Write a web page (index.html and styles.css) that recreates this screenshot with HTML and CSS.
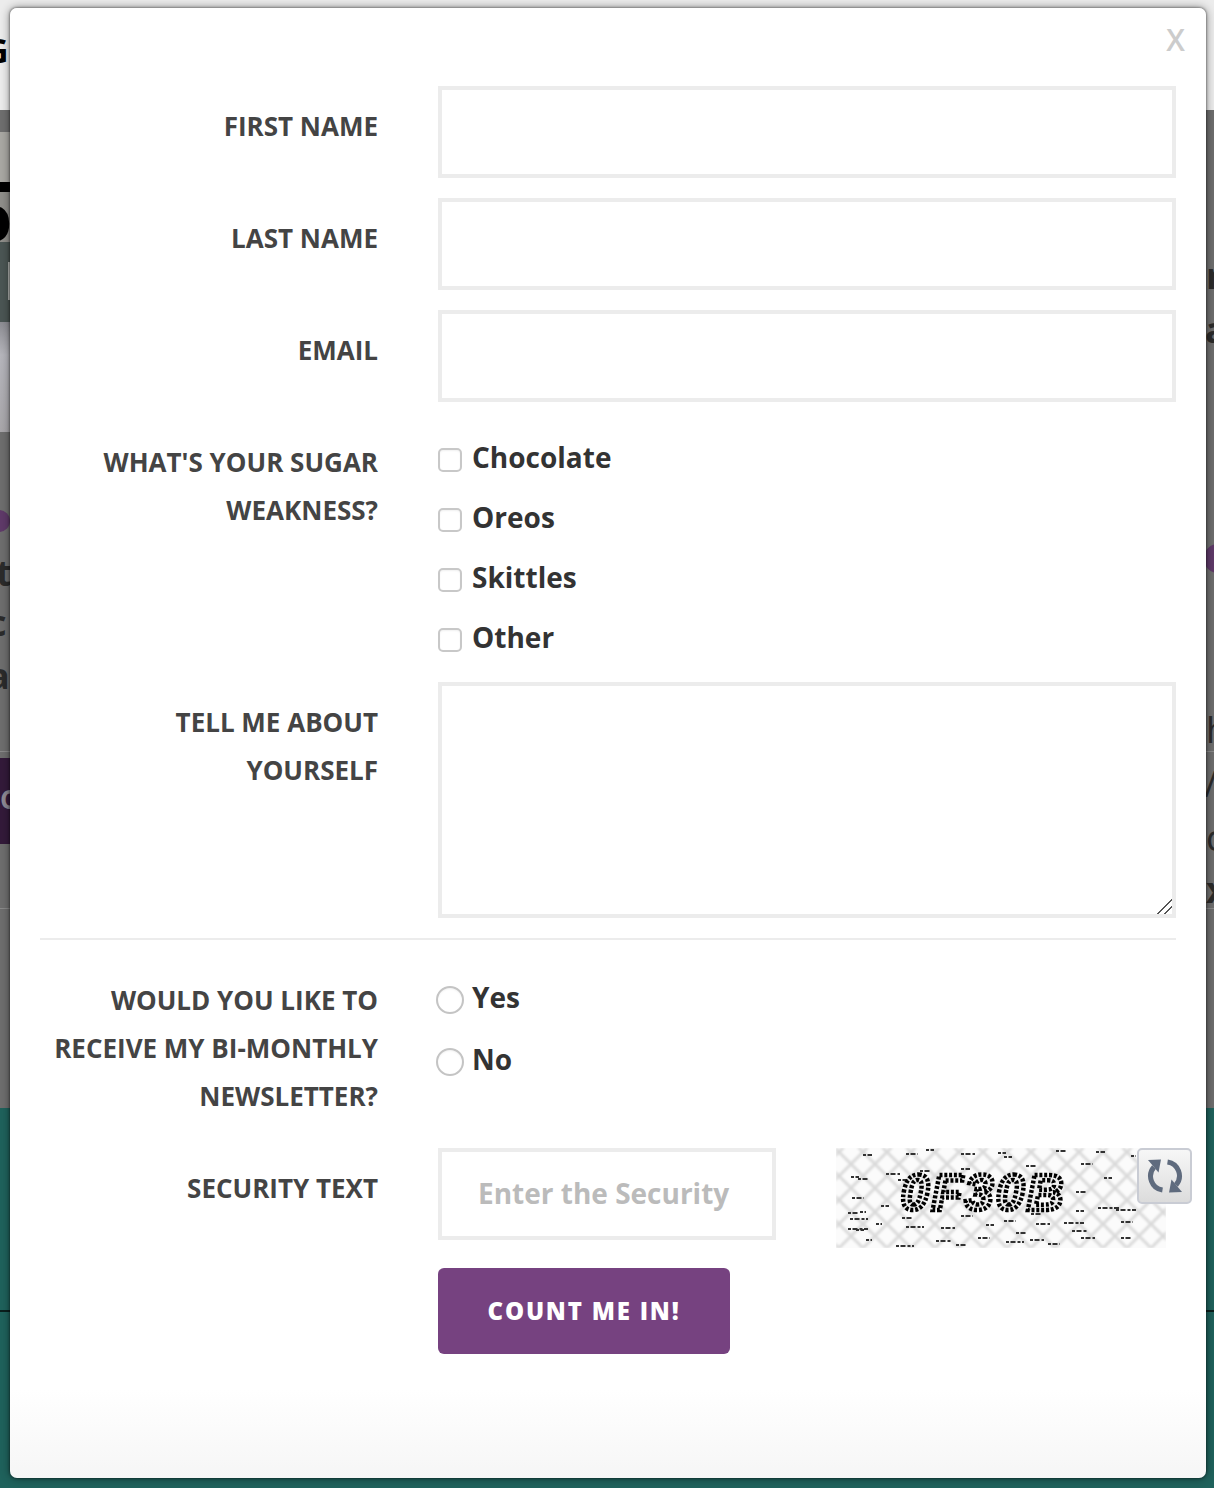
FILE: index.html
```html
<!DOCTYPE html>
<html lang="en">
<head>
<meta charset="utf-8">
<title>Count me in</title>
<link rel="stylesheet" href="styles.css">
</head>
<body>
<div class="backdrop">
  <div class="strip strip-left">
    <div class="b-top"></div><div class="b-grey1"></div><div class="b-photo1"></div><div class="b-black"></div><div class="b-photo2"></div><div class="b-green"></div><div class="b-lilac"></div><div class="b-grey2"></div><div class="b-plum"></div><div class="b-grey3"></div><div class="b-teal"></div>
  </div>
  <div class="strip strip-right">
    <div class="b-top"></div><div class="b-grey-r"></div><div class="b-teal"></div>
  </div>
  <span class="frag frag-g">G</span>
  <span class="frag frag-o">O</span>
  <span class="lightbar"></span>
  <span class="blip blip-l"></span>
  <span class="blip blip-r"></span>
  <span class="frag frag-t">t</span>
  <span class="frag frag-c">c</span>
  <span class="frag frag-e">a</span>
  <span class="frag frag-plum">C</span>
  <span class="frag frag-r1">r</span>
  <span class="frag frag-r2">a</span>
  <span class="frag frag-r3">h</span>
  <span class="frag frag-r4">/</span>
  <span class="frag frag-r5">c</span>
  <span class="frag frag-r6">x</span>
  <span class="rule rule-a"></span>
  <span class="rule rule-b"></span>
  <span class="rule rule-c"></span>
</div>

<div class="modal">
  <a class="close">X</a>
  <form class="form">
    <div class="row"><label class="lab">FIRST NAME</label><input class="field" type="text"></div>
    <div class="row"><label class="lab">LAST NAME</label><input class="field" type="text"></div>
    <div class="row"><label class="lab">EMAIL</label><input class="field" type="text"></div>
    <div class="row">
      <label class="lab">WHAT'S YOUR SUGAR WEAKNESS?</label>
      <div class="checks">
        <label class="opt"><input type="checkbox" class="cb">Chocolate</label>
        <label class="opt"><input type="checkbox" class="cb">Oreos</label>
        <label class="opt"><input type="checkbox" class="cb">Skittles</label>
        <label class="opt"><input type="checkbox" class="cb">Other</label>
      </div>
    </div>
    <div class="row"><label class="lab">TELL ME ABOUT<br>YOURSELF</label><textarea class="area"></textarea></div>
    <hr class="sep">
    <div class="row row-news">
      <label class="lab">WOULD YOU LIKE TO RECEIVE MY BI-MONTHLY NEWSLETTER?</label>
      <div class="radios">
        <label class="opt opt-r"><input type="radio" class="rb" name="news">Yes</label>
        <label class="opt opt-r"><input type="radio" class="rb" name="news">No</label>
      </div>
    </div>
    <div class="row">
      <label class="lab">SECURITY TEXT</label>
      <div class="sec">
        <input class="field sec-input" type="text" placeholder="Enter the Security">
        <div class="captcha">
          <svg width="330" height="100" viewBox="0 0 330 100">
            <defs>
              <pattern id="mesh" width="24" height="24" patternUnits="userSpaceOnUse" patternTransform="translate(3 4)">
                <path d="M-2 -2L26 26M-2 26L26 -2" stroke="#dadada" stroke-width="3" fill="none"/>
              </pattern>
              <filter id="soft"><feGaussianBlur stdDeviation="0.8"/></filter>
              <filter id="softer"><feGaussianBlur stdDeviation="0.5"/></filter>
            </defs>
            <rect width="330" height="100" fill="#fbfbfb"/>
            <rect width="330" height="100" fill="url(#mesh)" filter="url(#soft)"/>
            <path filter="url(#softer)" fill="none" stroke="#333" stroke-width="2.2" stroke-dasharray="3 1.5 5 2" d="M27 7h9M70 6h12M90 2h8M125 6h14M162 5h8M168 9h8M220 3h10M260 4h9M295 8h5M15 29h8M22 31h10M50 26h14M62 32h14M84 23h10M125 21h9M140 28h12M190 18h10M245 16h12M305 20h8M16 50h12M45 58h8M240 44h10M268 30h8M315 41h6M12 65h10M14 71h18M24 64h6M66 70h10M125 68h12M195 66h10M240 63h8M262 60h22M280 62h20M20 82h8M12 81h20M40 76h6M70 79h18M105 80h14M150 77h8M168 73h12M200 76h14M228 75h20M285 74h12M30 92h6M100 93h16M142 90h12M170 94h18M180 85h10M194 92h14M236 83h16M245 90h14M285 90h10M60 98h18M120 97h10M212 96h12"/>
            <text x="65" y="62" class="cap-text" filter="url(#softer)">0F30B</text>
          </svg>
        </div>
        <button type="button" class="refresh" aria-label="Refresh">
          <svg width="38" height="38" viewBox="0 0 38 38">
            <g>
              <path d="M16.500 33A14 14 0 0 1 8 10" fill="none" stroke="#5f6b7e" stroke-width="5"/>
              <path d="M2 3L15 2.500L12.500 15.500Z" fill="#5f6b7e"/>
            </g>
            <g transform="rotate(180 19 19)">
              <path d="M16.500 33A14 14 0 0 1 8 10" fill="none" stroke="#5f6b7e" stroke-width="5"/>
              <path d="M2 3L15 2.500L12.500 15.500Z" fill="#5f6b7e"/>
            </g>
          </svg>
        </button>
      </div>
    </div>
    <div class="row row-submit"><span></span><button type="button" class="submit">COUNT ME IN!</button></div>
  </form>
</div>
</body>
</html>
```

FILE: styles.css
```css
* { box-sizing: border-box; }
html, body { margin: 0; padding: 0; }
body {
  width: 1214px;
  height: 1488px;
  overflow: hidden;
  font-family: "Open Sans", "Noto Sans", sans-serif;
  position: relative;
  background: #6c6c6c;
}

/* page dimmed behind the dialog */
.backdrop { position: absolute; inset: 0; overflow: hidden; }
.strip { position: absolute; top: 0; bottom: 0; width: 607px; display: flex; flex-direction: column; }
.strip-left { left: 0; }
.strip-right { right: 0; }
.b-top { height: 110px; background: #ececec; }
.b-grey1 { height: 22px; background: #6f6f6f; }
.b-photo1 { height: 50px; background: #a9a8a3; }
.b-black { height: 10px; background: #000; }
.b-photo2 { height: 50px; background: #8f8e8a; }
.b-green { height: 80px; background: #4b5654; }
.b-lilac { height: 110px; background: linear-gradient(#8c8c92, #b6b6bc 30%, #a8a6aa); }
.b-grey2 { height: 326px; background: #6e6e6e; }
.b-plum { height: 86px; background: #331a3a; }
.b-grey3 { height: 264px; background: #6e6e6e; }
.b-grey-r { height: 998px; background: #6e6e6e; }
.b-teal { flex: 1; background: #1f625c; }

.frag { position: absolute; font-weight: 700; color: #2b2b2b; line-height: 1; }
.frag-g { left: -16px; top: 33px; font-size: 34px; color: #000; }
.frag-o { left: -28px; top: 198px; font-size: 50px; color: #000; font-weight: 800; }
.frag-t { left: -4px; top: 555px; font-size: 36px; }
.frag-c { left: -12px; top: 605px; font-size: 36px; }
.frag-e { left: -12px; top: 658px; font-size: 36px; }
.frag-plum { left: 0; top: 786px; font-size: 26px; color: #8f8a95; }
.frag-r1 { left: 1206px; top: 258px; font-size: 36px; }
.frag-r2 { left: 1205px; top: 312px; font-size: 36px; }
.frag-r3 { left: 1206px; top: 712px; font-size: 36px; font-weight: 400; }
.frag-r4 { left: 1204px; top: 766px; font-size: 36px; font-weight: 400; }
.frag-r5 { left: 1206px; top: 820px; font-size: 36px; font-weight: 400; }
.frag-r6 { left: 1206px; top: 872px; font-size: 36px; }
.lightbar { position: absolute; left: 8px; top: 262px; width: 2px; height: 38px; background: #b4b6b4; }
.blip { position: absolute; width: 30px; border-radius: 14px; background: #5f3a69; }
.blip-l { left: -20px; top: 510px; height: 22px; }
.blip-r { left: 1204px; top: 544px; height: 29px; }
.rule { position: absolute; left: 0; width: 1214px; height: 1px; background: #8a8a8a; }
.rule-a { top: 751px; }
.rule-b { top: 908px; }
.rule-c { top: 1310px; height: 2px; background: #0b1f1d; }

/* dialog */
.modal {
  position: absolute;
  left: 10px;
  top: 8px;
  width: 1196px;
  height: 1470px;
  padding: 78px 30px 0;
  background: linear-gradient(#fff 94%, #f6f6f6);
  border-radius: 7px;
  box-shadow: 0 0 2px 1px rgba(0, 0, 0, .3), 0 0 10px rgba(0, 0, 0, .45);
}
.close {
  position: absolute;
  right: 21px;
  top: 12px;
  font-size: 30px;
  line-height: 40px;
  color: #ccc;
  font-weight: 600;
}
.form { display: flex; flex-direction: column; gap: 20px; }
.row { display: grid; grid-template-columns: 338px 738px; column-gap: 60px; align-items: start; }
.lab {
  padding-top: 16px;
  text-align: right;
  font-size: 26px;
  line-height: 48px;
  font-weight: 700;
  color: #444;
}
.field {
  display: block;
  width: 738px;
  height: 92px;
  border: 4px solid #ececec;
  background: #fff;
  outline: none;
  border-radius: 0;
  font: 700 28px "Open Sans", sans-serif;
  padding: 0 36px 2px;
}
.checks { display: flex; flex-direction: column; gap: 12px; padding: 11px 0 1px; }
.opt {
  display: flex;
  align-items: center;
  height: 48px;
  font-size: 28px;
  line-height: 48px;
  font-weight: 700;
  color: #333;
}
.cb {
  appearance: none;
  margin: 6px 10px 0 0;
  width: 24px;
  height: 24px;
  flex: none;
  background: #fff;
  border: 2px solid #c8c8c8;
  border-radius: 5px;
  box-shadow: inset 0 1px 2px rgba(0, 0, 0, .06);
}
.area {
  display: block;
  width: 738px;
  height: 236px;
  border: 4px solid #ececec;
  background: #fff;
  outline: none;
  border-radius: 0;
}
.area::-webkit-resizer {
  background: linear-gradient(135deg, transparent 47%, #555 47%, #555 54%, transparent 54%, transparent 72%, #555 72%, #555 79%, transparent 79%);
}
.sep { margin: 0; border: 0; height: 2px; background: #ececec; }
.row-news { padding-bottom: 8px; }
.radios { display: flex; flex-direction: column; gap: 14px; padding-top: 13px; margin-left: -2px; }
.opt-r { height: 48px; }
.rb {
  appearance: none;
  margin: 6px 8px 0 0;
  width: 28px;
  height: 28px;
  flex: none;
  background: #fff;
  border: 2px solid #c4c4c4;
  border-radius: 50%;
  box-shadow: inset 0 1px 2px rgba(0, 0, 0, .06);
}
.sec { position: relative; display: flex; gap: 60px; align-items: flex-start; }
.sec-input { width: 338px; flex: none; }
.sec-input::placeholder { color: #bbb; opacity: 1; }
.captcha { width: 330px; height: 100px; flex: none; }
.captcha svg { display: block; }
.cap-text {
  font-family: "Liberation Sans", sans-serif;
  font-size: 50px;
  font-weight: 700;
  font-style: italic;
  letter-spacing: 3px;
  fill: #eee;
  stroke: #000;
  stroke-width: 4.5;
  stroke-dasharray: 3 1.800;
}
.refresh {
  position: absolute;
  left: 699px;
  top: 0;
  width: 55px;
  height: 56px;
  padding: 0;
  display: flex;
  align-items: center;
  justify-content: center;
  border: 2px solid #c9ccd4;
  border-radius: 5px;
  background: linear-gradient(#f7f7f7, #dcdcdc);
}
.submit {
  width: 292px;
  height: 86px;
  border: 0;
  border-radius: 6px;
  background: #764280;
  color: #fff;
  font: 800 24px "Open Sans", sans-serif;
  letter-spacing: 1.8px;
  padding: 0 0 1px;
}
```
